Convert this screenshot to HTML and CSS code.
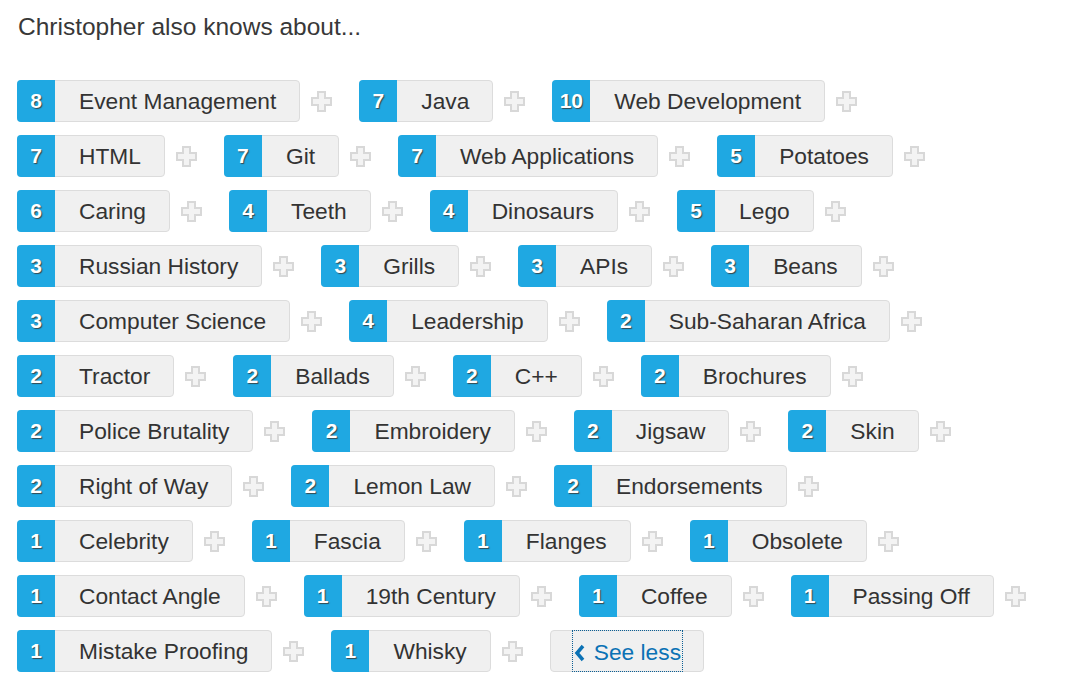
FILE: index.html
```html
<!DOCTYPE html>
<html>
<head>
<meta charset="utf-8">
<link rel="stylesheet" href="styles.css">
</head>
<body>
<div class="page">
  <h2 class="title">Christopher also knows about...</h2>
  <div class="skills">
    <div class="item"><span class="tag"><span class="count">8</span><span class="name">Event Management</span></span><svg class="plus" viewBox="0 0 21 21"><path d="M7 1H14V7H20V14H14V20H7V14H1V7H7Z"/></svg></div>
    <div class="item"><span class="tag"><span class="count">7</span><span class="name">Java</span></span><svg class="plus" viewBox="0 0 21 21"><path d="M7 1H14V7H20V14H14V20H7V14H1V7H7Z"/></svg></div>
    <div class="item"><span class="tag"><span class="count">10</span><span class="name">Web Development</span></span><svg class="plus" viewBox="0 0 21 21"><path d="M7 1H14V7H20V14H14V20H7V14H1V7H7Z"/></svg></div>
    <div class="item"><span class="tag"><span class="count">7</span><span class="name">HTML</span></span><svg class="plus" viewBox="0 0 21 21"><path d="M7 1H14V7H20V14H14V20H7V14H1V7H7Z"/></svg></div>
    <div class="item"><span class="tag"><span class="count">7</span><span class="name">Git</span></span><svg class="plus" viewBox="0 0 21 21"><path d="M7 1H14V7H20V14H14V20H7V14H1V7H7Z"/></svg></div>
    <div class="item"><span class="tag"><span class="count">7</span><span class="name">Web Applications</span></span><svg class="plus" viewBox="0 0 21 21"><path d="M7 1H14V7H20V14H14V20H7V14H1V7H7Z"/></svg></div>
    <div class="item"><span class="tag"><span class="count">5</span><span class="name">Potatoes</span></span><svg class="plus" viewBox="0 0 21 21"><path d="M7 1H14V7H20V14H14V20H7V14H1V7H7Z"/></svg></div>
    <div class="item"><span class="tag"><span class="count">6</span><span class="name">Caring</span></span><svg class="plus" viewBox="0 0 21 21"><path d="M7 1H14V7H20V14H14V20H7V14H1V7H7Z"/></svg></div>
    <div class="item"><span class="tag"><span class="count">4</span><span class="name">Teeth</span></span><svg class="plus" viewBox="0 0 21 21"><path d="M7 1H14V7H20V14H14V20H7V14H1V7H7Z"/></svg></div>
    <div class="item"><span class="tag"><span class="count">4</span><span class="name">Dinosaurs</span></span><svg class="plus" viewBox="0 0 21 21"><path d="M7 1H14V7H20V14H14V20H7V14H1V7H7Z"/></svg></div>
    <div class="item"><span class="tag"><span class="count">5</span><span class="name">Lego</span></span><svg class="plus" viewBox="0 0 21 21"><path d="M7 1H14V7H20V14H14V20H7V14H1V7H7Z"/></svg></div>
    <div class="item"><span class="tag"><span class="count">3</span><span class="name">Russian History</span></span><svg class="plus" viewBox="0 0 21 21"><path d="M7 1H14V7H20V14H14V20H7V14H1V7H7Z"/></svg></div>
    <div class="item"><span class="tag"><span class="count">3</span><span class="name">Grills</span></span><svg class="plus" viewBox="0 0 21 21"><path d="M7 1H14V7H20V14H14V20H7V14H1V7H7Z"/></svg></div>
    <div class="item"><span class="tag"><span class="count">3</span><span class="name">APIs</span></span><svg class="plus" viewBox="0 0 21 21"><path d="M7 1H14V7H20V14H14V20H7V14H1V7H7Z"/></svg></div>
    <div class="item"><span class="tag"><span class="count">3</span><span class="name">Beans</span></span><svg class="plus" viewBox="0 0 21 21"><path d="M7 1H14V7H20V14H14V20H7V14H1V7H7Z"/></svg></div>
    <div class="item"><span class="tag"><span class="count">3</span><span class="name">Computer Science</span></span><svg class="plus" viewBox="0 0 21 21"><path d="M7 1H14V7H20V14H14V20H7V14H1V7H7Z"/></svg></div>
    <div class="item"><span class="tag"><span class="count">4</span><span class="name">Leadership</span></span><svg class="plus" viewBox="0 0 21 21"><path d="M7 1H14V7H20V14H14V20H7V14H1V7H7Z"/></svg></div>
    <div class="item"><span class="tag"><span class="count">2</span><span class="name">Sub-Saharan Africa</span></span><svg class="plus" viewBox="0 0 21 21"><path d="M7 1H14V7H20V14H14V20H7V14H1V7H7Z"/></svg></div>
    <div class="item"><span class="tag"><span class="count">2</span><span class="name">Tractor</span></span><svg class="plus" viewBox="0 0 21 21"><path d="M7 1H14V7H20V14H14V20H7V14H1V7H7Z"/></svg></div>
    <div class="item"><span class="tag"><span class="count">2</span><span class="name">Ballads</span></span><svg class="plus" viewBox="0 0 21 21"><path d="M7 1H14V7H20V14H14V20H7V14H1V7H7Z"/></svg></div>
    <div class="item"><span class="tag"><span class="count">2</span><span class="name">C++</span></span><svg class="plus" viewBox="0 0 21 21"><path d="M7 1H14V7H20V14H14V20H7V14H1V7H7Z"/></svg></div>
    <div class="item"><span class="tag"><span class="count">2</span><span class="name">Brochures</span></span><svg class="plus" viewBox="0 0 21 21"><path d="M7 1H14V7H20V14H14V20H7V14H1V7H7Z"/></svg></div>
    <div class="item"><span class="tag"><span class="count">2</span><span class="name">Police Brutality</span></span><svg class="plus" viewBox="0 0 21 21"><path d="M7 1H14V7H20V14H14V20H7V14H1V7H7Z"/></svg></div>
    <div class="item"><span class="tag"><span class="count">2</span><span class="name">Embroidery</span></span><svg class="plus" viewBox="0 0 21 21"><path d="M7 1H14V7H20V14H14V20H7V14H1V7H7Z"/></svg></div>
    <div class="item"><span class="tag"><span class="count">2</span><span class="name">Jigsaw</span></span><svg class="plus" viewBox="0 0 21 21"><path d="M7 1H14V7H20V14H14V20H7V14H1V7H7Z"/></svg></div>
    <div class="item"><span class="tag"><span class="count">2</span><span class="name">Skin</span></span><svg class="plus" viewBox="0 0 21 21"><path d="M7 1H14V7H20V14H14V20H7V14H1V7H7Z"/></svg></div>
    <div class="item"><span class="tag"><span class="count">2</span><span class="name">Right of Way</span></span><svg class="plus" viewBox="0 0 21 21"><path d="M7 1H14V7H20V14H14V20H7V14H1V7H7Z"/></svg></div>
    <div class="item"><span class="tag"><span class="count">2</span><span class="name">Lemon Law</span></span><svg class="plus" viewBox="0 0 21 21"><path d="M7 1H14V7H20V14H14V20H7V14H1V7H7Z"/></svg></div>
    <div class="item"><span class="tag"><span class="count">2</span><span class="name">Endorsements</span></span><svg class="plus" viewBox="0 0 21 21"><path d="M7 1H14V7H20V14H14V20H7V14H1V7H7Z"/></svg></div>
    <div class="item"><span class="tag"><span class="count">1</span><span class="name">Celebrity</span></span><svg class="plus" viewBox="0 0 21 21"><path d="M7 1H14V7H20V14H14V20H7V14H1V7H7Z"/></svg></div>
    <div class="item"><span class="tag"><span class="count">1</span><span class="name">Fascia</span></span><svg class="plus" viewBox="0 0 21 21"><path d="M7 1H14V7H20V14H14V20H7V14H1V7H7Z"/></svg></div>
    <div class="item"><span class="tag"><span class="count">1</span><span class="name">Flanges</span></span><svg class="plus" viewBox="0 0 21 21"><path d="M7 1H14V7H20V14H14V20H7V14H1V7H7Z"/></svg></div>
    <div class="item"><span class="tag"><span class="count">1</span><span class="name">Obsolete</span></span><svg class="plus" viewBox="0 0 21 21"><path d="M7 1H14V7H20V14H14V20H7V14H1V7H7Z"/></svg></div>
    <div class="item"><span class="tag"><span class="count">1</span><span class="name">Contact Angle</span></span><svg class="plus" viewBox="0 0 21 21"><path d="M7 1H14V7H20V14H14V20H7V14H1V7H7Z"/></svg></div>
    <div class="item"><span class="tag"><span class="count">1</span><span class="name">19th Century</span></span><svg class="plus" viewBox="0 0 21 21"><path d="M7 1H14V7H20V14H14V20H7V14H1V7H7Z"/></svg></div>
    <div class="item"><span class="tag"><span class="count">1</span><span class="name">Coffee</span></span><svg class="plus" viewBox="0 0 21 21"><path d="M7 1H14V7H20V14H14V20H7V14H1V7H7Z"/></svg></div>
    <div class="item"><span class="tag"><span class="count">1</span><span class="name">Passing Off</span></span><svg class="plus" viewBox="0 0 21 21"><path d="M7 1H14V7H20V14H14V20H7V14H1V7H7Z"/></svg></div>
    <div class="item"><span class="tag"><span class="count">1</span><span class="name">Mistake Proofing</span></span><svg class="plus" viewBox="0 0 21 21"><path d="M7 1H14V7H20V14H14V20H7V14H1V7H7Z"/></svg></div>
    <div class="item"><span class="tag"><span class="count">1</span><span class="name">Whisky</span></span><svg class="plus" viewBox="0 0 21 21"><path d="M7 1H14V7H20V14H14V20H7V14H1V7H7Z"/></svg></div>
    <div class="item"><button class="see-less"><span class="focus"><svg class="chev" width="11" height="18" viewBox="0 0 11 18"><path d="M9 2 L3 9 L9 16" fill="none" stroke="#0b72b5" stroke-width="3.5"/></svg>See less</span></button></div>
  </div>
</div>
</body>
</html>
```

FILE: styles.css
```css
html, body {
  margin: 0;
  padding: 0;
  background: #fff;
}

.page {
  padding: 13px 0 0 17px;
  font-family: "Liberation Sans", Arial, sans-serif;
  color: #333;
  width: 1049px;
  box-sizing: border-box;
}

.title {
  margin: 0 0 40px 1px;
  font-size: 24.5px;
  font-weight: normal;
  line-height: 27px;
  color: #383838;
}

.skills {
  display: flex;
  flex-wrap: wrap;
  row-gap: 13px;
  column-gap: 27px;
}

.item {
  display: flex;
  align-items: center;
}

.tag {
  display: flex;
  height: 42px;
  box-sizing: border-box;
  border: 1px solid #dcdcdc;
  border-radius: 4px;
  background: #f0f0f0;
  font-size: 22.75px;
}

.count {
  display: flex;
  align-items: center;
  justify-content: center;
  min-width: 38px;
  margin: -1px 0 -1px -1px;
  padding: 0 2px;
  box-sizing: border-box;
  background: #1fa8e2;
  border-radius: 4px 0 0 4px;
  color: #fff;
  font-weight: bold;
  font-size: 21px;
  text-shadow: 1px 1px 1px rgba(60, 40, 30, 0.75);
}

.name {
  display: flex;
  align-items: center;
  padding: 1px 23px 0 24px;
  color: #333;
}

.plus {
  display: block;
  width: 21px;
  height: 21px;
  margin-left: 11px;
  fill: #f3f3f3;
  stroke: #d8d8d8;
  stroke-width: 2;
}

.see-less {
  height: 42px;
  box-sizing: border-box;
  border: 1px solid #dcdcdc;
  border-radius: 4px;
  background: #f0f0f0;
  padding: 0 21px 0 22px;
  font-family: "Liberation Sans", Arial, sans-serif;
  font-size: 22.75px;
  color: #0b72b5;
  display: flex;
  align-items: center;
  white-space: nowrap;
}

.focus {
  display: flex;
  align-items: center;
  gap: 9px;
  height: 40px;
  padding: 3px 1px 0 1px;
  box-sizing: border-box;
  outline: 1px dotted #0b5f95;
}

.chev {
  display: block;
}
```
